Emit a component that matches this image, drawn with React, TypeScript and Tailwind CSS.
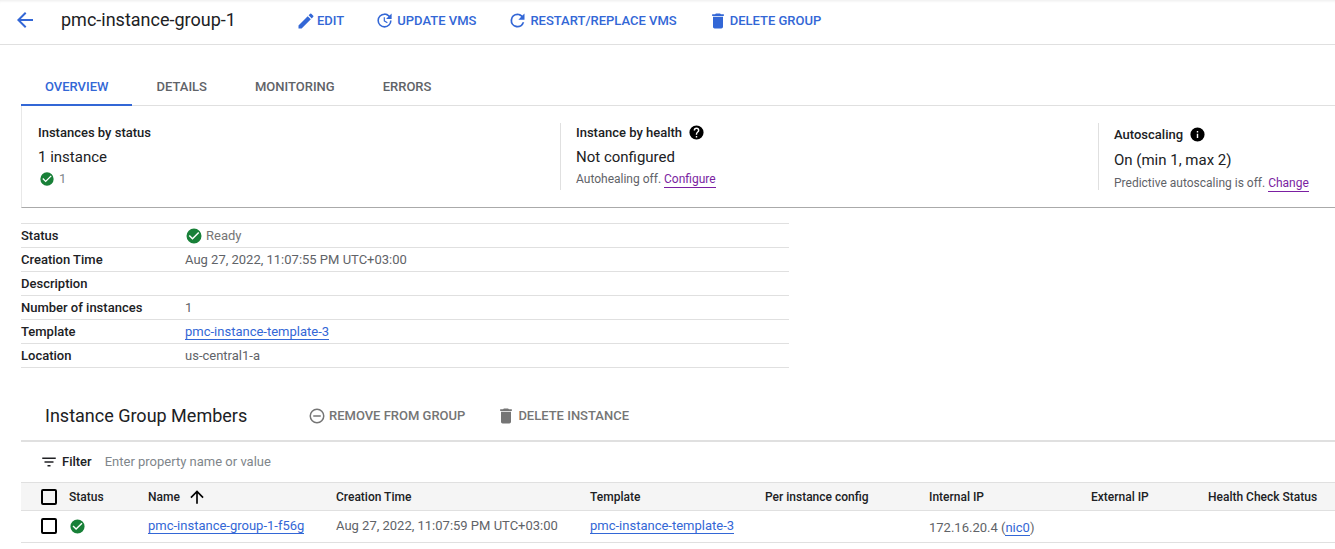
import type { ReactNode } from "react";

const BLUE = "#3367d6";

const icons = {
  back: "M20 11H7.83l5.59-5.59L12 4l-8 8 8 8 1.41-1.41L7.83 13H20v-2z",
  up: "M4 12l1.41 1.41L11 7.83V20h2V7.83l5.58 5.59L20 12l-8-8-8 8z",
  edit: "M3 17.25V21h3.75L17.81 9.94l-3.75-3.75L3 17.25zM20.71 7.04a1 1 0 0 0 0-1.41l-2.34-2.34a1 1 0 0 0-1.41 0l-1.83 1.83 3.75 3.75 1.83-1.83z",
  update: "M11 8v5l4.25 2.52.77-1.28-3.52-2.09V8H11zm10 2V3l-2.64 2.64A8.96 8.96 0 0 0 12 3a9 9 0 1 0 9 9h-2a7 7 0 1 1-7-7c1.93 0 3.68.79 4.95 2.05L14 10h7z",
  restart: "M17.65 6.35A7.96 7.96 0 0 0 12 4a8 8 0 1 0 7.73 10h-2.08A6 6 0 1 1 12 6c1.66 0 3.14.69 4.22 1.78L13 11h7V4l-2.35 2.35z",
  trash: "M6 19c0 1.1.9 2 2 2h8a2 2 0 0 0 2-2V7H6v12zM19 4h-3.5l-1-1h-5l-1 1H5v2h14V4z",
  remove: "M7 11v2h10v-2H7zm5-9a10 10 0 1 0 0 20 10 10 0 0 0 0-20zm0 18a8 8 0 1 1 0-16 8 8 0 0 1 0 16z",
  check: "M12 2a10 10 0 1 0 0 20 10 10 0 0 0 0-20zm-2 15-5-5 1.41-1.41L10 14.17l7.59-7.59L19 8l-9 9z",
  help: "M12 2a10 10 0 1 0 0 20 10 10 0 0 0 0-20zm1 17h-2v-2h2v2zm2.07-7.75-.9.92C13.45 12.9 13 13.5 13 15h-2v-.5c0-1.1.45-2.1 1.17-2.83l1.24-1.26A2 2 0 1 0 10 9H8a4 4 0 1 1 8 0c0 .88-.36 1.68-.93 2.25z",
  info: "M12 2a10 10 0 1 0 0 20 10 10 0 0 0 0-20zm1 15h-2v-6h2v6zm0-8h-2V7h2v2z",
  filter: "M10 18h4v-2h-4v2zM3 6v2h18V6H3zm3 7h12v-2H6v2z",
};

function Icon({ d, size = 18, color = "currentColor", className = "" }: { d: string; size?: number; color?: string; className?: string }) {
  return (
    <svg width={size} height={size} viewBox="0 0 24 24" fill={color} className={`shrink-0 ${className}`}>
      <path d={d} />
    </svg>
  );
}

function Checkbox() {
  return <div className="w-4 h-4 border-2 border-black rounded-[2px] shrink-0" />;
}

function ActionButton({ icon, label, size, gap }: { icon: string; label: string; size: number; gap: string }) {
  return (
    <div className={`flex items-center ${gap} text-[#3367d6] text-[13px] font-medium whitespace-nowrap`}>
      <Icon d={icon} size={size} color={BLUE} />
      {label}
    </div>
  );
}

function Link({ children, purple }: { children: ReactNode; purple?: boolean }) {
  return (
    <span className={`border-b leading-[15px] inline-block ${purple ? "text-[#7b1fa2] border-[#7b1fa2]" : "text-[#3367d6] border-[#3367d6]"}`}>
      {children}
    </span>
  );
}

const tabs = ["Overview", "Details", "Monitoring", "Errors"];

const details: { label: string; value: ReactNode }[] = [
  {
    label: "Status",
    value: (
      <span className="flex items-center gap-[3px] text-[#757575]">
        <Icon d={icons.check} size={18} color="#188038" />
        Ready
      </span>
    ),
  },
  { label: "Creation Time", value: "Aug 27, 2022, 11:07:55 PM UTC+03:00" },
  { label: "Description", value: "" },
  { label: "Number of instances", value: "1" },
  { label: "Template", value: <Link>pmc-instance-template-3</Link> },
  { label: "Location", value: "us-central1-a" },
];

const columns = "grid grid-cols-[28px_79px_188px_254px_175px_164px_162px_117px_128px]";

export default function App() {
  return (
    <div className="w-[1335px] h-[549px] overflow-hidden bg-white text-[13px] text-[#202124] font-['Roboto',sans-serif]">
      {/* top bar */}
      <header className="h-[45px] flex items-center pb-[5px] border-b border-[#e0e0e0] shadow-[inset_0_3px_3px_-2px_rgba(0,0,0,0.08)]">
        <span className="ml-[13px]">
          <Icon d={icons.back} size={24} color={BLUE} />
        </span>
        <h1 className="ml-6 w-[235px] text-[18px] font-normal whitespace-nowrap">pmc-instance-group-1</h1>
        <div className="flex items-center gap-[31px] mt-[2px]">
          <ActionButton icon={icons.edit} label="EDIT" size={20} gap="gap-px" />
          <ActionButton icon={icons.update} label="UPDATE VMS" size={19} gap="gap-[3px]" />
          <ActionButton icon={icons.restart} label="RESTART/REPLACE VMS" size={21} gap="gap-[2px]" />
          <ActionButton icon={icons.trash} label="DELETE GROUP" size={20} gap="gap-[2px]" />
        </div>
      </header>

      <div className="pl-[21px]">
        {/* tabs */}
        <nav className="mt-[23px] h-[38px] flex border-b border-[#e0e0e0]">
          {tabs.map((tab, i) => (
            <div
              key={tab}
              className={`px-6 flex items-center uppercase text-[13px] font-medium ${
                i === 0 ? "text-[#3367d6] border-b-2 border-[#3367d6] -mb-px pt-px" : "text-[#5f6368]"
              }`}
            >
              {tab}
            </div>
          ))}
        </nav>

        {/* summary */}
        <section className="h-[102px] flex border-l border-b border-l-[#e8e8e8] border-b-[#aaaaaa]">
          <div className="w-[538px] pl-4 pt-[18px]">
            <div className="h-[18px] font-medium leading-[18px]">Instances by status</div>
            <div className="mt-[5px] text-[15px] leading-5">1 instance</div>
            <div className="mt-[3px] flex items-center gap-1 text-[#80868b] leading-[18px] pl-px">
              <Icon d={icons.check} size={16} color="#188038" />1
            </div>
          </div>
          <div className="mt-[17px] h-[67px] w-[538px] border-l border-[#e0e0e0] pl-[15px]">
            <div className="flex items-center gap-[6px] h-[18px] font-medium mt-px">
              Instance by health
              <Icon d={icons.help} size={17} color="#000" className="-mt-[2px]" />
            </div>
            <div className="mt-[5px] text-[15px] leading-5">Not configured</div>
            <div className="mt-[3px] text-xs leading-[18px] text-[#5f6368]">
              Autohealing off. <Link purple>Configure</Link>
            </div>
          </div>
          <div className="mt-[17px] h-[67px] border-l border-[#e0e0e0] pl-[15px] whitespace-nowrap">
            <div className="flex items-center gap-[6px] h-[18px] font-medium mt-[3px]">
              Autoscaling
              <Icon d={icons.info} size={17} color="#000" className="-mt-[2px]" />
            </div>
            <div className="mt-[6px] text-[15px] leading-5">On (min 1, max 2)</div>
            <div className="mt-1 text-xs leading-[18px] text-[#5f6368]">
              Predictive autoscaling is off. <Link purple>Change</Link>
            </div>
          </div>
        </section>

        {/* details */}
        <dl className="mt-[15px] w-[768px] border-t border-[#e0e0e0]">
          {details.map((row) => (
            <div key={row.label} className="h-6 flex items-center border-b border-[#e0e0e0]">
              <dt className="w-[164px] font-medium shrink-0">{row.label}</dt>
              <dd className="text-[#5f6368]">{row.value}</dd>
            </div>
          ))}
        </dl>

        {/* members */}
        <div className="mt-[28px] h-[46px] flex items-center border-b-2 border-[#e0e0e0] pb-[5px]">
          <h2 className="ml-6 w-[263px] text-[18px] font-normal">Instance Group Members</h2>
          <div className="flex items-center gap-[3px] text-[#757575] font-medium">
            <Icon d={icons.remove} size={18} color="#757575" />
            REMOVE FROM GROUP
          </div>
          <div className="ml-[31px] flex items-center gap-[2px] text-[#757575] font-medium">
            <Icon d={icons.trash} size={20} color="#757575" />
            DELETE INSTANCE
          </div>
        </div>

        <div className="h-10 flex items-center">
          <span className="ml-[19px] mr-1"><Icon d={icons.filter} size={18} color="#202124" /></span>
          <span className="font-medium">Filter</span>
          <span className="ml-[13px] text-[#80868b]">Enter property name or value</span>
        </div>

        {/* table */}
        <div className={`${columns} h-[29px] items-center bg-[#f5f5f5] border-y border-[#e0e0e0] font-medium text-xs pl-5`}>
          <Checkbox />
          <span>Status</span>
          <span className="flex items-center gap-[7px]">
            Name
            <Icon d={icons.up} size={20} color="#000" />
          </span>
          <span>Creation Time</span>
          <span>Template</span>
          <span>Per instance config</span>
          <span>Internal IP</span>
          <span>External IP</span>
          <span>Health Check Status</span>
        </div>
        <div className={`${columns} h-8 items-center border-b border-[#e0e0e0] pl-5 pb-px`}>
          <Checkbox />
          <span><Icon d={icons.check} size={17} color="#188038" /></span>
          <span><Link>pmc-instance-group-1-f56g</Link></span>
          <span className="text-[#5f6368]">Aug 27, 2022, 11:07:59 PM UTC+03:00</span>
          <span><Link>pmc-instance-template-3</Link></span>
          <span />
          <span className="text-[#5f6368] pt-[3px]">
            172.16.20.4 (<Link>nic0</Link>)
          </span>
          <span />
          <span />
        </div>
      </div>
    </div>
  );
}
